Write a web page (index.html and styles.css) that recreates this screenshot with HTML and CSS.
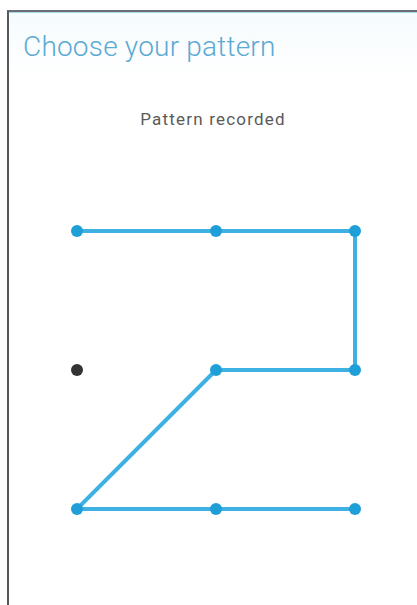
FILE: index.html
```html
<!DOCTYPE html>
<html>
<head>
	<meta charset="utf-8" />
	<title>Choose your pattern</title>
	<link rel="stylesheet" href="styles.css">
</head>
<body>
	<div class="frame">
		<div class="header">
			<h1 class="title">Choose your pattern</h1>
		</div>
		<p class="status">Pattern recorded</p>
		<svg class="pattern" width="408" height="420" viewBox="0 0 408 420">
			<!-- path drawn through the selected dots -->
			<polyline points="68,88 207,88 346,88 346,227 207,227 68,366 207,366 346,366"
				fill="none" stroke="#3fb0e2" stroke-width="4" stroke-linejoin="round" />
			<circle cx="68" cy="88" r="6" fill="#1f9fd8" />
			<circle cx="207" cy="88" r="6" fill="#1f9fd8" />
			<circle cx="346" cy="88" r="6" fill="#1f9fd8" />
			<circle cx="68" cy="227" r="6" fill="#333" />
			<circle cx="207" cy="227" r="6" fill="#1f9fd8" />
			<circle cx="346" cy="227" r="6" fill="#1f9fd8" />
			<circle cx="68" cy="366" r="6" fill="#1f9fd8" />
			<circle cx="207" cy="366" r="6" fill="#1f9fd8" />
			<circle cx="346" cy="366" r="6" fill="#1f9fd8" />
		</svg>
	</div>
</body>
</html>
```

FILE: styles.css
```css
body {
	font-family: Roboto, "Liberation Sans", sans-serif;
	background-color: #fff;
	margin: 0;
	padding: 0;
}

/* Device screen edge */
.frame {
	margin: 10px 0 0 7px;
	border-top: 2px solid #6b6f72;
	border-left: 2px solid #55595c;
	height: 593px;
	overflow: hidden;
}

.header {
	background: linear-gradient(#f6fbfd, #fff);
	border-top: 1px solid #a8d8ec;
	padding: 17px 0 14px 14px;
}

.title {
	margin: 0;
	font-size: 28px;
	font-weight: 300;
	letter-spacing: 0.2px;
	color: #5aaad4;
}

.status {
	margin: 32px 0 0;
	text-align: center;
	font-size: 17px;
	letter-spacing: 1.2px;
	color: #5a5a5a;
}

.pattern {
	display: block;
	margin-top: 14px;
}
```
